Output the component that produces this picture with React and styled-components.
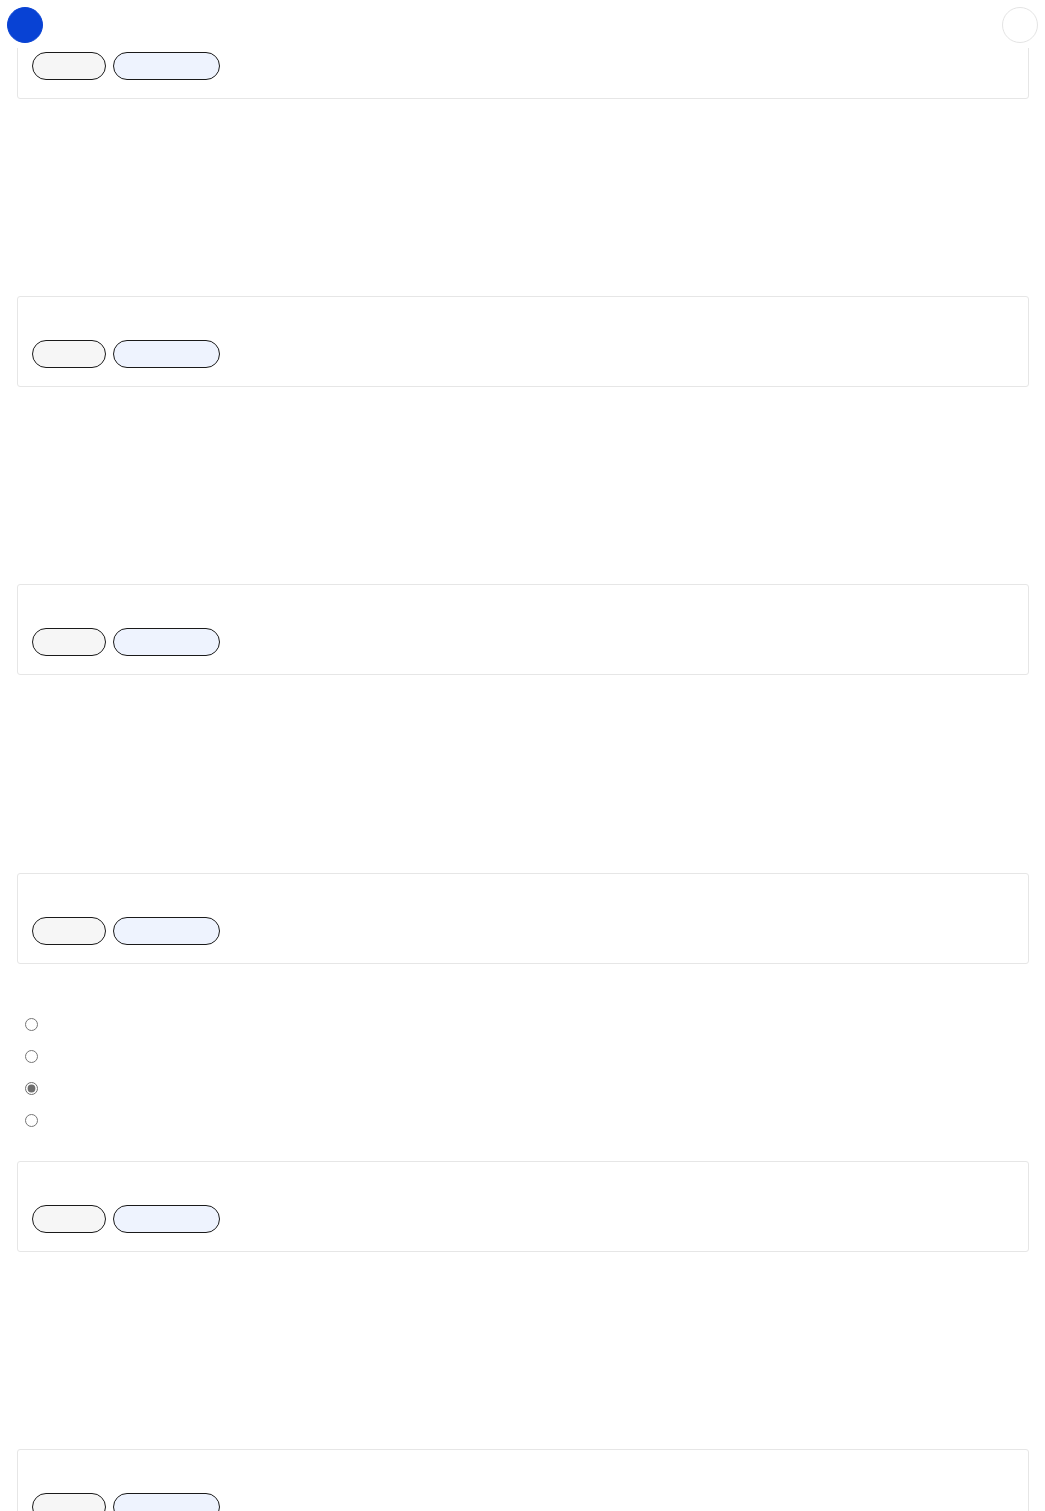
import React from "react";
import styled, { createGlobalStyle } from "styled-components";

const GlobalStyle = createGlobalStyle`
  html, body {
    margin: 0;
    padding: 0;
    background: #ffffff;
    font-family: "Liberation Sans", Arial, sans-serif;
  }
`;

const TopBar = styled.header`
  position: fixed;
  top: 0;
  left: 0;
  right: 0;
  height: 48px;
  padding: 0 7px;
  background: #ffffff;
  display: flex;
  align-items: flex-start;
  justify-content: space-between;
  z-index: 10;
`;

const Avatar = styled.div`
  width: 36px;
  height: 36px;
  margin-top: 7px;
  border-radius: 50%;
  box-sizing: border-box;
  background: ${(p) => (p.$filled ? "#0842d4" : "#ffffff")};
  border: 1px solid ${(p) => (p.$filled ? "#0842d4" : "#e4e4e4")};
`;

const Page = styled.main`
  padding: 8px 16px 200px 17px;
`;

const Card = styled.section`
  box-sizing: border-box;
  height: 91px;
  border: 1px solid #e6e6e6;
  border-radius: 3px;
  padding: 43px 14px 0;
`;

const Actions = styled.div`
  display: flex;
  gap: 7px;
`;

const Pill = styled.button`
  box-sizing: border-box;
  width: ${(p) => p.$w}px;
  height: 28px;
  border: 1px solid #1a1a1a;
  border-radius: 14px;
  background: ${(p) => (p.$primary ? "#eef3fe" : "#f6f6f6")};
  padding: 0;
  font: inherit;
  color: transparent;
`;

const Spacer = styled.div`
  height: 197.2px;
`;

const Choices = styled.div`
  height: 197.2px;
  box-sizing: border-box;
  padding: 54px 0 0 8px;
  display: flex;
  flex-direction: column;
  gap: 19px;
`;

const Radio = styled.input`
  width: 13px;
  height: 13px;
  margin: 0;
  display: block;
  accent-color: #6e6e6e;
`;

const cards = [0, 1, 2, 3, 4, 5];

function ActionCard() {
  return (
    <Card>
      <Actions>
        <Pill $w={74} />
        <Pill $w={107} $primary />
      </Actions>
    </Card>
  );
}

export default function App() {
  return (
    <>
      <GlobalStyle />
      <TopBar>
        <Avatar $filled />
        <Avatar />
      </TopBar>
      <Page>
        {cards.map((i) => (
          <React.Fragment key={i}>
            <ActionCard />
            {i === 3 ? (
              <Choices>
                {[0, 1, 2, 3].map((r) => (
                  <Radio
                    key={r}
                    type="radio"
                    name="choice"
                    defaultChecked={r === 2}
                  />
                ))}
              </Choices>
            ) : (
              <Spacer />
            )}
          </React.Fragment>
        ))}
      </Page>
    </>
  );
}
